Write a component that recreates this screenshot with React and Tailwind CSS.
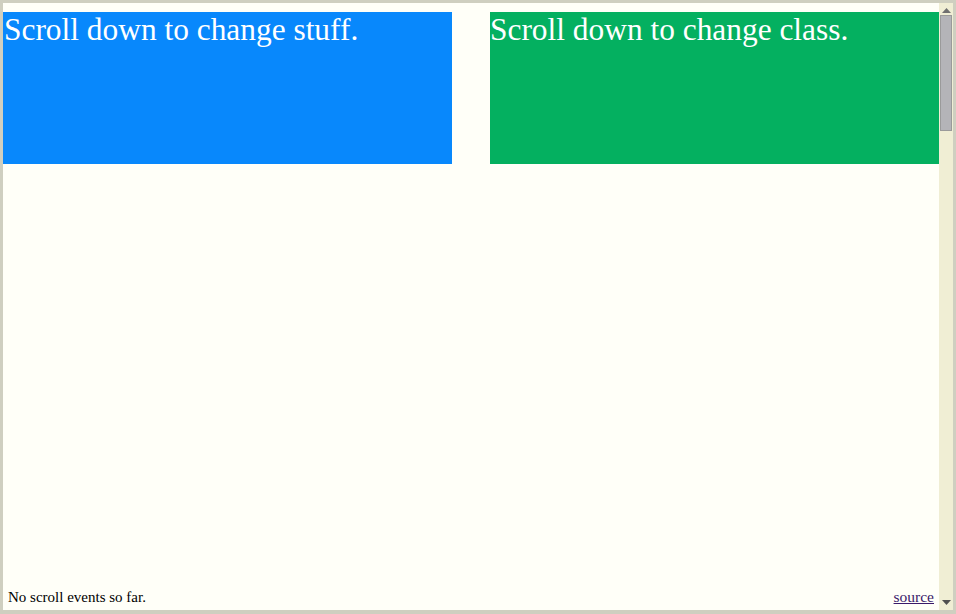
import React from 'react';

const App = () => {
  return (
    <div className="w-[956px] h-[614px] bg-[#cfcfc0] pt-[3px] pl-[3px] pr-[3px] pb-[4px] flex font-['Liberation_Serif',serif] overflow-hidden">
      <div className="flex-1 bg-[#fffff8] flex flex-col pt-[9px]">
        <div className="flex justify-between">
          <div className="w-[449px] h-[152px] bg-[#0888fc] text-white text-[31.4px] leading-[36px] pl-px">
            Scroll down to change stuff.
          </div>
          <div className="w-[449px] h-[152px] bg-[#04b060] text-white text-[31.4px] leading-[36px]">
            Scroll down to change class.
          </div>
        </div>
        <div className="mt-auto flex justify-between items-end px-[5px] pb-[4px] text-[15px] leading-[18px] text-black">
          <span>No scroll events so far.</span>
          <a href="#" className="underline text-[#3a1a6a] text-[15.5px]">source</a>
        </div>
      </div>
      {/* scrollbar */}
      <div className="w-[14px] bg-[#f0eed4] flex flex-col items-center pt-[5px] pb-[5px]">
        <svg width="9" height="5" viewBox="0 0 9 5"><path d="M4.5 0L9 5H0z" fill="#707070" /></svg>
        <div className="mt-[2px] w-[12px] h-[116px] bg-[#b4b4b8] border border-[#9a9a9a]" />
        <div className="flex-1" />
        <svg width="9" height="5" viewBox="0 0 9 5"><path d="M0 0h9L4.5 5z" fill="#505050" /></svg>
      </div>
    </div>
  );
};

export default App;
